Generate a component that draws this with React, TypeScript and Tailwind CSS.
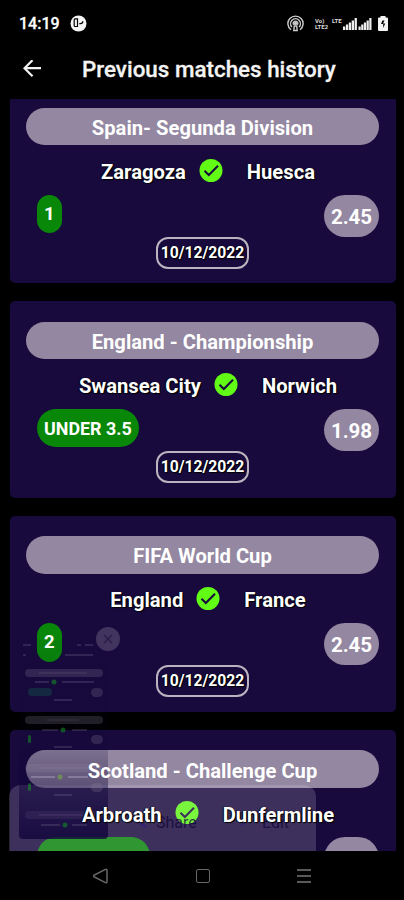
import clsx from "clsx";

type Match = {
  league: string;
  home: string;
  away: string;
  tip: string;
  odds: string;
  date: string;
};

const matches: Match[] = [
  { league: "Spain- Segunda Division", home: "Zaragoza", away: "Huesca", tip: "1", odds: "2.45", date: "10/12/2022" },
  { league: "England - Championship", home: "Swansea City", away: "Norwich", tip: "UNDER 3.5", odds: "1.98", date: "10/12/2022" },
  { league: "FIFA World Cup", home: "England", away: "France", tip: "2", odds: "2.45", date: "10/12/2022" },
  { league: "Scotland - Challenge Cup", home: "Arbroath", away: "Dunfermline", tip: "", odds: "", date: "" },
];

const outline = "[text-shadow:1px_1px_1px_#000,-1px_0_1px_#000]";

function StatusBar() {
  return (
    <div className="flex h-[46px] shrink-0 items-center pt-[1px] pl-[19px] pr-[16px]">
      <span className="w-[40px] text-[16px] font-medium leading-none [-webkit-text-stroke:0.3px_#fff]">14:19</span>
      <svg className="ml-[11px] size-[17px]" viewBox="0 0 17 17">
        <circle cx="8.5" cy="8.5" r="8" fill="#f4f4f4" />
        <path d="M7.500 3.800H5.200a1 1 0 0 0-1 1v5.700a1 1 0 0 0 1 1h2.300z" fill="none" stroke="#000" strokeWidth="1.200" />
        <path d="M9.300 8.600h1.300a2.300 2.300 0 0 0 2.200-2.300" fill="none" stroke="#000" strokeWidth="1.300" />
      </svg>
      <svg className="ml-auto size-[17px]" viewBox="0 0 17 17" fill="none" stroke="#ccc" strokeWidth="1.400">
        <path d="M4 14.800a7.600 7.600 0 1 1 9 0" />
        <path d="M4.900 12a4.900 4.900 0 1 1 7.200 0" />
        <path d="M6.600 9.800a2.300 2.300 0 1 1 3.800 0M6.800 15.500l.5-4.500h2.400l.5 4.500z" />
        <circle cx="8.5" cy="8.5" r="1" fill="#ccc" />
      </svg>
      <div className="ml-[11px] flex w-[14px] flex-col text-[6px] font-bold leading-[6px] text-[#ddd]">
        <span className="whitespace-nowrap">Vo)</span>
        <span className="whitespace-nowrap">LTE2</span>
      </div>
      <span className="mb-[6px] ml-[3px] w-[11px] text-[6px] font-bold leading-none text-[#ddd]">LTE</span>
      <svg className="h-[13px] w-[29px]" viewBox="0 0 29 13" fill="#eee">
        <path d="M0 9.500h2.300V13H0zM2.900 7.500h2.300V13H2.900zM5.800 5.500h2.300V13H5.800zM8.700 3.500H11V13H8.700zM11.600 1h2.300v12h-2.300zM15.500 9.500h2.200V13h-2.200zM18.200 7.500h2.200V13h-2.200zM20.900 5.500h2.200V13h-2.200zM23.600 3.500h2.200V13h-2.200zM26.300 1h2.200v12h-2.200z" />
      </svg>
      <svg className="ml-[6px] h-[15px] w-[10px]" viewBox="0 0 10 15">
        <path d="M2.500 0h5v1.500H9a1 1 0 0 1 1 1V14a1 1 0 0 1-1 1H1a1 1 0 0 1-1-1V2.500a1 1 0 0 1 1-1h1.500z" fill="#f4f4f4" />
        <path d="M6.500 4.500H4.500L3 8h2.200v4l2-4.500H5z" fill="#000" />
      </svg>
    </div>
  );
}

function Header() {
  return (
    <header className="flex h-[53px] shrink-0 items-center pb-[8px] pl-[23px]">
      <svg className="size-[18px]" viewBox="0 0 18 18" fill="none" stroke="#f2f2f2" strokeWidth="2.200">
        <path d="M18 8.200H2M9.500.2L1.500 8.200l8 8" />
      </svg>
      <h1 className="ml-[41px] mt-[1px] whitespace-nowrap text-[22.400px] font-medium leading-none text-[#f4f4f4] [-webkit-text-stroke:0.3px_#f4f4f4]">
        Previous matches history
      </h1>
    </header>
  );
}

function Check() {
  return (
    <svg className="mr-[24px] ml-[13px] size-[24px] shrink-0" viewBox="0 0 24 24">
      <circle cx="12" cy="11.500" r="11.500" fill="#62fb16" />
      <path d="M5.500 11.700l4.300 4.300 9.200-9.300" fill="none" stroke="#180a3c" strokeWidth="2" />
    </svg>
  );
}

function MatchCard({ match }: { match: Match }) {
  return (
    <article className="flex h-[196.300px] shrink-0 flex-col rounded-[5px] bg-[#180a3c] pr-[17px] pl-[16.500px] pt-[20.500px]">
      <div className="flex h-[37.500px] shrink-0 items-center justify-center rounded-full bg-[#9387a1] pt-[3px] text-[20.200px] font-bold leading-none">
        <span className="relative z-10">{match.league}</span>
      </div>
      <div className={clsx("mt-[13.500px] flex h-[24px] shrink-0 items-center justify-center pl-[11px] text-[20.200px] font-bold leading-none", outline)}>
        <span className="relative z-10 pt-[3px]">{match.home}</span>
        <Check />
        <span className="relative z-10 pt-[3px]">{match.away}</span>
      </div>
      <div className="mt-[12px] flex h-[42px] shrink-0 items-start justify-between pl-[11px]">
        <span
          className={clsx(
            "flex h-[38.500px] items-center rounded-[19px] bg-[#088708] px-[7px] pt-[2px] font-bold",
            match.tip.length > 1 ? "text-[17.900px]" : "text-[18.500px]",
            !match.tip && "w-[113px]",
          )}
        >
          <span className="relative z-10">{match.tip}</span>
        </span>
        <span className="flex h-[42px] w-[55px] items-center justify-center rounded-full bg-[#9387a1] pt-[3px] text-[20.500px] font-bold">
          {match.odds}
        </span>
      </div>
      <div className={clsx("flex h-[32px] w-[93px] shrink-0 items-center justify-center self-center rounded-[12px] border-2 border-[#b9b4bf] text-[15.700px] font-bold", outline)}>
        {match.date}
      </div>
    </article>
  );
}

// Fading share sheet and screenshot preview shown over the list
function ScreenshotPreview() {
  return (
    <>
      <div className="absolute left-[9px] top-[785px] flex h-[66px] w-[307px] items-start rounded-t-[12px] bg-[#e8e0f4]/[.18] pt-[28px] pl-[125px] text-[16px] leading-[20px] text-[#100438]/75">
        <svg className="mt-[1px] mr-[6px] size-[16px]" viewBox="0 0 16 16" fill="none" stroke="#2410a0" strokeOpacity=".45" strokeWidth="2">
          <path d="M12 3L4 8l8 5" />
        </svg>
        <span className="w-[41px]">Share</span>
        <svg className="mt-[1px] mr-[9px] ml-[42px] size-[14px]" viewBox="0 0 14 14" stroke="#2410a0" strokeOpacity=".3" strokeWidth="2">
          <path d="M2 12L11 3" />
        </svg>
        <span>Edit</span>
      </div>
      <div className="absolute left-[19px] top-[640px] h-[199px] w-[89px] overflow-hidden rounded-[4px] bg-linear-to-b from-[#0c0038]/5 via-[#0c0038]/10 to-[#0c0038]/75">
        <svg className="size-full" viewBox="0 0 89 199">
          <g fill="#9387a1" fillOpacity=".22">
            <rect x="6" y="29" width="78" height="8" rx="4" />
            <rect x="6" y="76" width="78" height="8" rx="4" />
            <rect x="6" y="124" width="78" height="8" rx="4" />
            <rect x="6" y="171" width="78" height="8" rx="4" fillOpacity=".12" />
            <rect x="72" y="48" width="12" height="9" rx="4.500" />
            <rect x="72" y="95" width="12" height="9" rx="4.500" />
            <rect x="72" y="143" width="12" height="9" rx="4.500" />
          </g>
          <rect x="9" y="48" width="24" height="8" rx="4" fill="#0a8a50" fillOpacity=".25" />
          <g fill="#14b020" fillOpacity=".45">
            <circle cx="35" cy="42" r="2.500" />
            <circle cx="44" cy="90" r="2.500" />
            <circle cx="41" cy="137" r="2.500" fill="#80c830" />
            <circle cx="46" cy="185" r="2.500" />
            <rect x="9" y="95" width="3" height="8" rx="1.500" />
            <rect x="9" y="143" width="3" height="8" rx="1.500" />
          </g>
          <g stroke="#b8adc8" strokeOpacity=".17" strokeWidth="2">
            <path d="M4 5h8M58 5h4M66 5h8M4 15h3M46 15h28" />
            <path d="M16 42h14M43 42h32M35 60h18M23 90h16M53 90h15M35 107h18" />
            <path d="M12 137h24M49 137h20" strokeOpacity=".4" />
            <path d="M35 155h18M22 185h19M53 185h15" />
          </g>
          <path d="M20 33h48M28 80h32M20 128h48M20 175h48" stroke="#c8b8d8" strokeOpacity=".08" strokeWidth="2" />
        </svg>
      </div>
      <div className="absolute left-[96px] top-[627px] flex size-[24px] items-center justify-center rounded-full bg-[#90859e]/35">
        <svg className="size-[10px]" viewBox="0 0 10 10" stroke="#180a3c" strokeOpacity=".6" strokeWidth="1.300">
          <path d="M1 1l8 8M9 1l-8 8" />
        </svg>
      </div>
    </>
  );
}

function NavBar() {
  return (
    <nav className="flex h-[49px] shrink-0 items-center justify-between bg-black pr-[93px] pl-[93px]">
      <svg className="size-[16px]" viewBox="0 0 16 16" fill="none" stroke="#686868" strokeWidth="1.500">
        <path d="M12.500 1.300L1.500 7a1 1 0 0 0 0 2l11 5.700a1 1 0 0 0 1.500-.9V2.200a1 1 0 0 0-1.500-.9z" />
      </svg>
      <span className="size-[14px] rounded-[2px] border-[1.500px] border-[#686868]" />
      <svg className="h-[14px] w-[14px]" viewBox="0 0 14 14" stroke="#777" strokeWidth="1.700">
        <path d="M0 1h14M0 7h14M0 13h14" />
      </svg>
    </nav>
  );
}

export default function App() {
  return (
    <div className="relative flex h-[900px] w-[404px] flex-col overflow-hidden bg-black font-['Roboto',sans-serif] text-white">
      <StatusBar />
      <Header />
      <main className="h-[752px] shrink-0 overflow-hidden">
        <div className="-mt-[12px] flex flex-col gap-[18px] pr-[8px] pl-[9.500px]">
          {matches.map((match) => (
            <MatchCard key={match.league} match={match} />
          ))}
        </div>
      </main>
      <ScreenshotPreview />
      <NavBar />
    </div>
  );
}
